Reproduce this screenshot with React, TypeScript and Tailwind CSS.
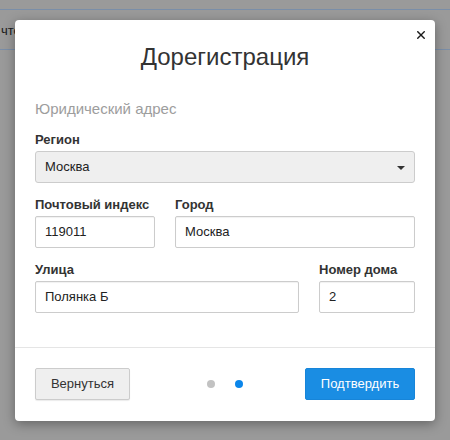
import React from "react";

const font = { fontFamily: '"Liberation Sans", Arial, sans-serif' };

function Label({ children }: { children: React.ReactNode }) {
  return (
    <div className="text-[13px] leading-[18px] font-bold text-[#333333] mb-[2px] whitespace-nowrap">
      {children}
    </div>
  );
}

function Input({ value }: { value: string }) {
  return (
    <div className="h-[32px] border border-[#cccccc] rounded-[2px] bg-white shadow-[inset_0_1px_1px_rgba(0,0,0,0.06)] flex items-center px-[9px] text-[13px] text-[#222222]">
      {value}
    </div>
  );
}

export default function App() {
  return (
    <div className="relative w-[450px] h-[440px] overflow-hidden bg-[#9a9a9a]" style={font}>
      {/* page behind the overlay */}
      <div className="h-[9px]" />
      <div className="h-[41px] border-y border-[#7a8ea8] flex items-center overflow-hidden">
        <span className="ml-[1px] mt-[3px] text-[13px] text-[#1c1c1c] whitespace-nowrap">чтовый индекс</span>
      </div>

      {/* modal */}
      <div className="absolute left-[15px] top-[20px] w-[420px] bg-white rounded-[4px] shadow-[0_3px_12px_rgba(0,0,0,0.35)]">
        <button className="absolute top-[11px] right-[10px] w-[8px] h-[8px] flex items-center justify-center">
          <svg width="8" height="8" viewBox="0 0 8 8">
            <path d="M0.8 0.8 L7.2 7.2 M7.2 0.8 L0.8 7.2" stroke="#1a1a1a" strokeWidth="1.4" strokeLinecap="square" />
          </svg>
        </button>

        <div className="px-[20px]">
          <div className="pt-[24px] text-center text-[24px] leading-[26px] text-[#333333]">Дорегистрация</div>

          <div className="mt-[29px] text-[15px] leading-[20px] text-[#9d9d9d]">Юридический адрес</div>

          <div className="mt-[12px]">
            <Label>Регион</Label>
            <div className="relative h-[32px] border border-[#cccccc] rounded-[3px] bg-[#efefef] flex items-center px-[9px] text-[13px] text-[#222222]">
              Москва
              <span className="absolute right-[9px] top-[14px] w-0 h-0 border-t-[4px] border-t-[#333333] border-x-[4px] border-x-transparent" />
            </div>
          </div>

          <div className="mt-[13px] grid grid-cols-[120px_1fr] gap-x-[20px]">
            <div>
              <Label>Почтовый индекс</Label>
              <Input value="119011" />
            </div>
            <div>
              <Label>Город</Label>
              <Input value="Москва" />
            </div>
          </div>

          <div className="mt-[13px] grid grid-cols-[1fr_96px] gap-x-[20px] pb-[34px]">
            <div>
              <Label>Улица</Label>
              <Input value="Полянка Б" />
            </div>
            <div>
              <Label>Номер дома</Label>
              <Input value="2" />
            </div>
          </div>
        </div>

        <div className="border-t border-[#e5e5e5] px-[20px] pt-[20px] pb-[21px] flex items-center">
          <div className="flex-1 flex">
            <button className="w-[95px] h-[32px] bg-[#efefef] border border-[#cccccc] rounded-[2px] shadow-[0_1px_1px_rgba(0,0,0,0.08)] text-[13px] text-[#333333]">
              Вернуться
            </button>
          </div>
          <div className="flex items-center gap-[20px]">
            <span className="w-[8px] h-[8px] rounded-full bg-[#c2c2c2]" />
            <span className="w-[8px] h-[8px] rounded-full bg-[#0b86ea]" />
          </div>
          <div className="flex-1 flex justify-end">
            <button className="w-[110px] h-[32px] bg-[#1a8de3] border border-[#1785d9] rounded-[2px] text-[13px] text-white">
              Подтвердить
            </button>
          </div>
        </div>
      </div>
    </div>
  );
}
